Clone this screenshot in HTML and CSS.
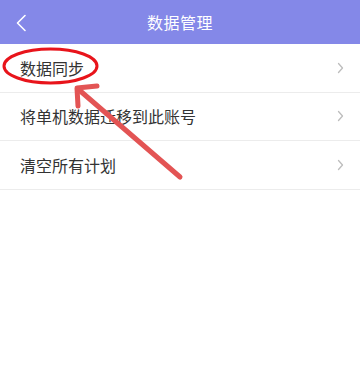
FILE: index.html
```html
<!DOCTYPE html>
<html lang="zh">
<head>
<meta charset="utf-8">
<link rel="stylesheet" href="styles.css">
</head>
<body>
<div class="page">
  <header class="nav">
    <span class="back">
      <svg width="12" height="18" viewBox="0 0 12 18"><path d="M10 1.5 L2.5 9 L10 16.5" fill="none" stroke="#fff" stroke-width="1.6" stroke-linecap="round" stroke-linejoin="round"/></svg>
    </span>
    <h1 class="title">数据管理</h1>
  </header>
  <ul class="list">
    <li class="row"><span class="label">数据同步</span><span class="chev"><svg width="7" height="12" viewBox="0 0 7 12"><path d="M1.5 1.5 L5.5 6 L1.5 10.5" fill="none" stroke="#bdbdbd" stroke-width="1.3" stroke-linecap="round" stroke-linejoin="round"/></svg></span></li>
    <li class="row"><span class="label">将单机数据迁移到此账号</span><span class="chev"><svg width="7" height="12" viewBox="0 0 7 12"><path d="M1.5 1.5 L5.5 6 L1.5 10.5" fill="none" stroke="#bdbdbd" stroke-width="1.3" stroke-linecap="round" stroke-linejoin="round"/></svg></span></li>
    <li class="row"><span class="label">清空所有计划</span><span class="chev"><svg width="7" height="12" viewBox="0 0 7 12"><path d="M1.5 1.5 L5.5 6 L1.5 10.5" fill="none" stroke="#bdbdbd" stroke-width="1.3" stroke-linecap="round" stroke-linejoin="round"/></svg></span></li>
  </ul>
  <svg class="annot" width="360" height="391" viewBox="0 0 360 391">
    <ellipse cx="50.5" cy="66" rx="46.5" ry="17" fill="none" stroke="#e8141b" stroke-width="3"/>
    <g stroke="#e35454" stroke-width="5" stroke-linecap="round" fill="none" stroke-linejoin="round">
      <path d="M180 177 L78 89"/>
      <path d="M97 86 L77 88 L78 106"/>
    </g>
  </svg>
</div>
</body>
</html>
```
FILE: styles.css
```css
* { box-sizing: border-box; }
html, body { margin: 0; padding: 0; background: #fff; }
body { font-family: "Noto Sans CJK SC", "Noto Sans", sans-serif; }
.page { position: relative; width: 360px; height: 391px; overflow: hidden; background: #fff; }
.nav {
  height: 44px;
  background: #8488e8;
  display: flex;
  align-items: center;
  justify-content: center;
  position: relative;
}
.back { position: absolute; left: 15px; top: 14px; display: flex; }
.title { margin: 0; color: #fff; font-size: 16px; font-weight: 400; letter-spacing: 0.5px; }
.list { list-style: none; margin: 0; padding: 0; }
.row {
  height: 48.5px;
  display: flex;
  align-items: center;
  justify-content: space-between;
  padding: 0 16px 0 20px;
  border-bottom: 1px solid #ececec;
}
.label { font-size: 16px; color: #333; }
.chev { display: flex; }
.annot { position: absolute; left: 0; top: 0; pointer-events: none; }
```
